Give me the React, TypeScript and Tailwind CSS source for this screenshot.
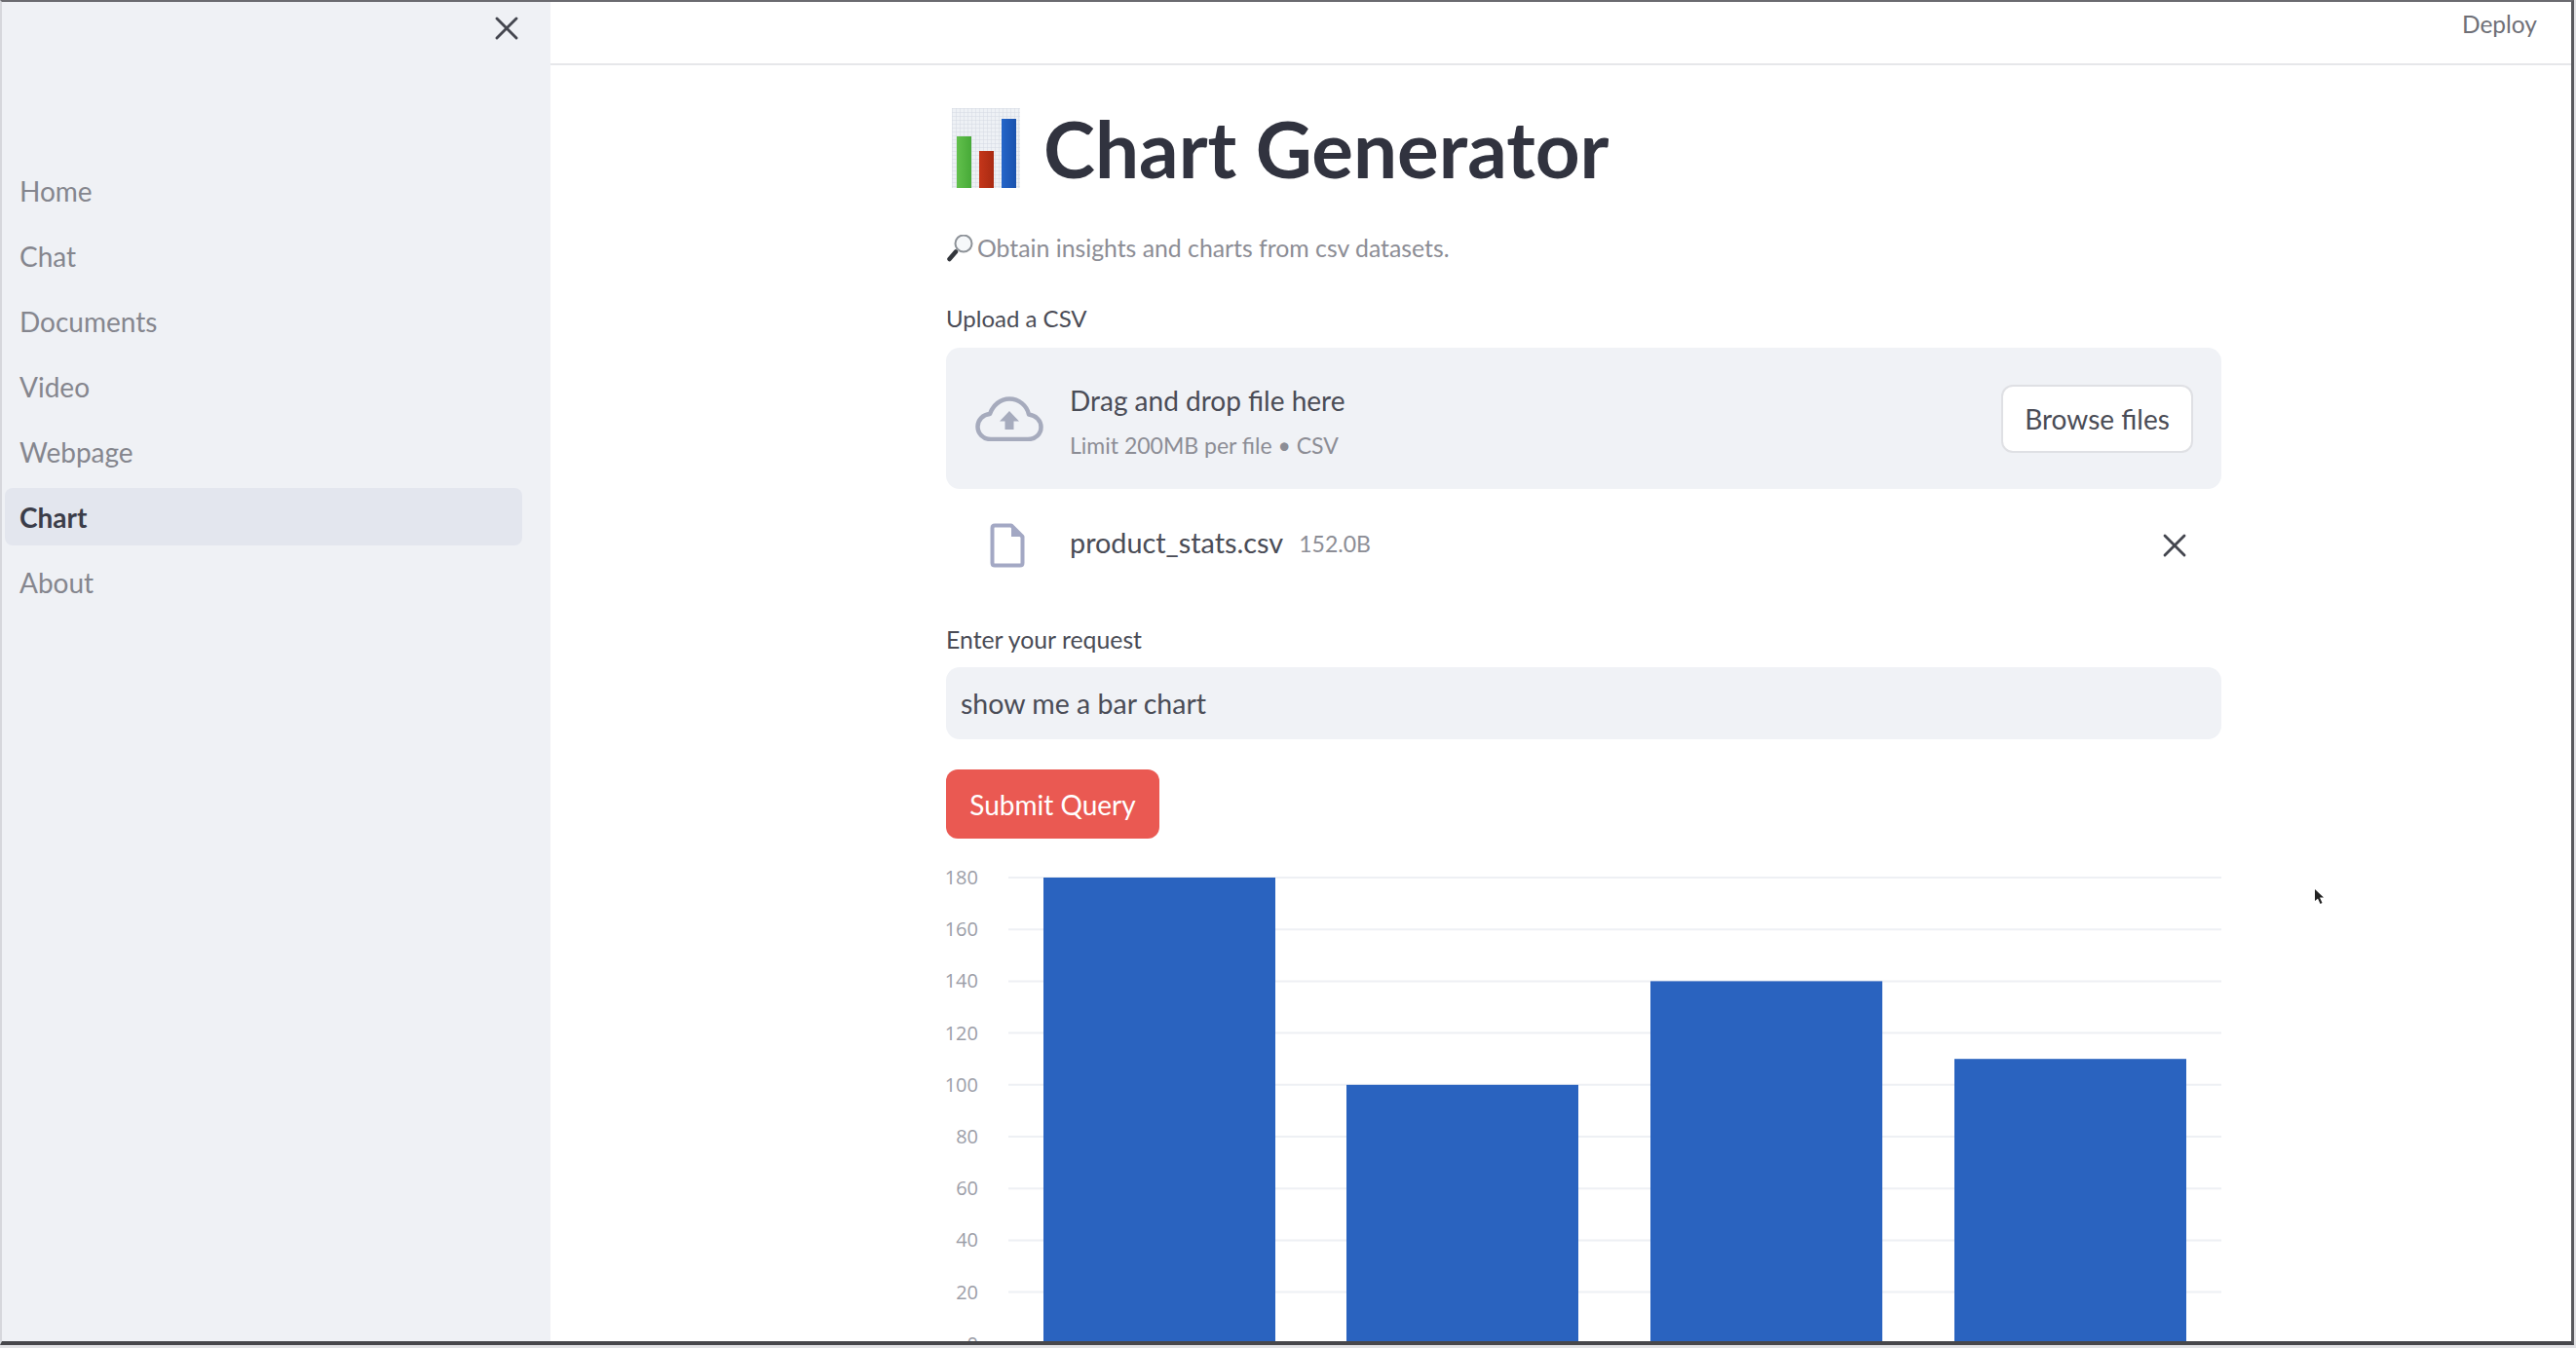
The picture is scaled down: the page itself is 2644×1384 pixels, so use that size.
import { X } from "lucide-react";

const NAV_ITEMS = ["Home", "Chat", "Documents", "Video", "Webpage", "Chart", "About"];
const TICKS = [180, 160, 140, 120, 100, 80, 60, 40, 20, 0];
const BARS = [
  { x: 1071, value: 180 },
  { x: 1382, value: 100 },
  { x: 1694, value: 140 },
  { x: 2006, value: 110 },
];

// chart svg starts at x=971 on the page
const CHART_LEFT = 971;
const Y_TOP = 22;
const UNIT = 53.2 / 20;

function BarChartEmoji() {
  return (
    <svg width="70" height="82" viewBox="0 0 70 82" className="shrink-0">
      <defs>
        <pattern id="emoji-grid" width="4" height="4" patternUnits="userSpaceOnUse">
          <rect width="4" height="4" fill="#eef1f5" />
          <path d="M4 0H0V4" fill="none" stroke="#d5dae3" strokeWidth="1" />
        </pattern>
        <linearGradient id="emoji-green" x1="0" x2="1" y1="0" y2="0">
          <stop offset="0" stopColor="#62c04c" />
          <stop offset="1" stopColor="#47aa38" />
        </linearGradient>
        <linearGradient id="emoji-red" x1="0" x2="1" y1="0" y2="0">
          <stop offset="0" stopColor="#c5361a" />
          <stop offset="1" stopColor="#a82a12" />
        </linearGradient>
        <linearGradient id="emoji-blue" x1="0" x2="1" y1="0" y2="0">
          <stop offset="0" stopColor="#2465c9" />
          <stop offset="1" stopColor="#1a52ad" />
        </linearGradient>
      </defs>
      <rect width="70" height="82" fill="url(#emoji-grid)" />
      <rect x="5" y="29" width="15" height="53" fill="url(#emoji-green)" />
      <rect x="28" y="44" width="15" height="38" fill="url(#emoji-red)" />
      <rect x="51" y="11" width="15" height="71" fill="url(#emoji-blue)" />
    </svg>
  );
}

function MagnifierEmoji() {
  return (
    <svg width="28" height="28" viewBox="0 0 28 28" className="shrink-0">
      <line x1="3.500" y1="25" x2="10" y2="17.500" stroke="#33363c" strokeWidth="4.500" strokeLinecap="round" />
      <circle cx="18" cy="9" r="8.500" fill="#f6f8fa" stroke="#8d9298" strokeWidth="2" />
    </svg>
  );
}

function CloudUpload() {
  return (
    <svg width="70" height="46" viewBox="0 0 70 46" fill="none">
      <path
        d="M16 44C8 44 2.500 38 2.500 31C2.500 24 8 18.500 15 18C18 9 26 2.500 35 2.500C45 2.500 53 9.500 55 18.500C62 19.500 67.500 24.500 67.500 31.500C67.500 38.500 62 44 54 44Z"
        stroke="#a6abbd"
        strokeWidth="4.500"
        strokeLinejoin="round"
      />
      <path d="M35 15L45 25.500H39.500V34H30.500V25.500H25Z" fill="#a6abbd" />
    </svg>
  );
}

function FileIcon() {
  return (
    <svg width="36" height="46" viewBox="0 0 36 46" fill="none">
      <path d="M2.500 5C2.500 3.500 3.500 2.500 5 2.500H22L33.500 14V41C33.500 42.500 32.500 43.500 31 43.500H5C3.500 43.500 2.500 42.500 2.500 41Z" stroke="#a3a8c4" strokeWidth="4" strokeLinejoin="round" />
      <path d="M22 2.500V14H33.500Z" fill="#a3a8c4" />
    </svg>
  );
}

function Chart() {
  return (
    <svg width="1309" height="510" viewBox="0 0 1309 510" className="mt-[18px] block">
      {TICKS.map((tick) => {
        const y = Y_TOP + (180 - tick) * UNIT;
        return (
          <g key={tick}>
            {tick > 0 && <line x1="64" x2="1309" y1={y} y2={y} stroke="#eef0f4" strokeWidth="2" />}
            <text x="33" y={y + 7} textAnchor="end" fontSize="20" fill="#9c9ea8" fontFamily="'Open Sans', sans-serif">
              {tick}
            </text>
          </g>
        );
      })}
      {BARS.map((bar) => (
        <rect key={bar.x} x={bar.x - CHART_LEFT} y={Y_TOP + (180 - bar.value) * UNIT} width="238" height={bar.value * UNIT} fill="#2a63bf" />
      ))}
    </svg>
  );
}

export default function App() {
  return (
    <div className="h-screen w-screen bg-[#e2e2e5] pb-[3px] pr-[2px]">
      <div className="relative flex h-full w-full overflow-hidden border-b-4 border-l-2 border-r-[3px] border-t-2 border-b-[#47474b] border-l-[#d6d7dc] border-r-[#5a5a5e] border-t-[#6b6b70] bg-white font-['Lato',sans-serif] text-[#31333f]">
        {/* Sidebar */}
        <aside className="w-[563px] shrink-0 bg-[#eff1f5] pl-[3px] pr-[29px]">
          <div className="flex h-[160px] justify-end pt-[7px]">
            <X className="-mr-1 size-[40px] text-[#44464f]" strokeWidth={1.7} />
          </div>
          <nav className="flex flex-col">
            {NAV_ITEMS.map((item) => (
              <div
                key={item}
                className={
                  item === "Chart"
                    ? "my-1 flex h-[59px] items-center rounded-lg bg-[#e3e6ee] px-[15px] text-[28px] font-bold text-[#3b3d49]"
                    : "my-1 flex h-[59px] items-center rounded-lg px-[15px] text-[28px] text-[#85868e]"
                }
              >
                {item}
              </div>
            ))}
          </nav>
        </aside>

        {/* Main area */}
        <main className="min-w-0 flex-1">
          <header className="flex h-[65px] justify-end border-b-2 border-[#e6e7ea] pr-[35px] pt-[7px] text-[24.500px] leading-[32px] text-[#6f7077]">
            Deploy
          </header>

          <div className="ml-[406px] w-[1309px]">
            <div className="flex h-[161px] items-center gap-6 pb-[3px] pl-[6px] pt-[11px]">
              <BarChartEmoji />
              <h1 className="text-[80px] font-bold leading-none text-[#31333f]">Chart Generator</h1>
            </div>

            <p className="mt-[10px] flex items-center gap-[4px] text-[24.800px] leading-[34px] text-[#8c8d95]">
              <MagnifierEmoji />
              Obtain insights and charts from csv datasets.
            </p>

            <label className="mt-[38px] block text-[24px] leading-[34px] text-[#4a4c56]">Upload a CSV</label>
            <div className="mt-[13px] flex h-[145px] items-center rounded-[14px] bg-[#f0f2f6] pl-[30px] pr-[29px]">
              <CloudUpload />
              <div className="ml-[27px] flex-1 pt-[6px]">
                <div className="text-[28px] leading-[36px] text-[#4a4c56]">Drag and drop file here</div>
                <div className="mt-[12px] text-[23px] leading-[32px] text-[#8c8d95]">Limit 200MB per file • CSV</div>
              </div>
              <button className="h-[70px] w-[197px] rounded-xl border-2 border-[#dfe0e4] bg-white text-[28px] text-[#4a4c56]">
                Browse files
              </button>
            </div>

            <div className="flex h-[116px] items-center pl-[45px] pr-[28px]">
              <FileIcon />
              <span className="-mt-1 ml-[46px] text-[28.800px] text-[#4a4c56]">product_stats.csv</span>
              <span className="-mt-1 ml-[16px] flex-1 text-[23px] text-[#8c8d95]">152.0B</span>
              <X className="size-[40px] text-[#44464f]" strokeWidth={1.7} />
            </div>

            <label className="mt-[22px] block text-[24.800px] leading-[34px] text-[#4a4c56]">Enter your request</label>
            <div className="mt-[11px] flex h-[74px] items-center rounded-[14px] bg-[#f0f2f6] px-[15px] text-[28.500px] text-[#4a4c56]">
              show me a bar chart
            </div>

            <button className="mt-[31px] h-[71px] w-[219px] rounded-xl bg-[#ea5952] text-[28px] text-white">
              Submit Query
            </button>

            <Chart />
          </div>
        </main>

        {/* Mouse pointer */}
        <svg width="12" height="18" viewBox="0 0 12 18" className="absolute left-[2373px] top-[910px]">
          <path d="M1 1L1 13L4 10.500L6.500 16L8.500 15L6 9.500L10 9.500Z" fill="#222" />
        </svg>
      </div>
    </div>
  );
}
